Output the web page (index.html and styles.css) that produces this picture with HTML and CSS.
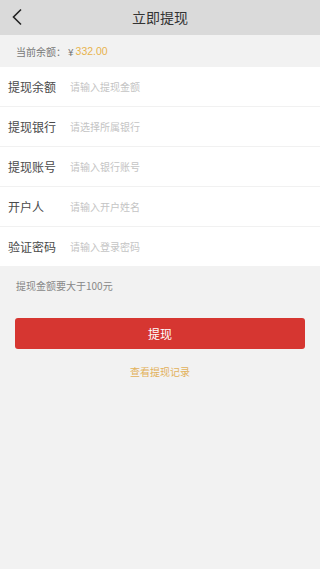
FILE: index.html
```html
<!DOCTYPE html>
<html lang="zh">
<head>
<meta charset="utf-8">
<link rel="stylesheet" href="styles.css">
</head>
<body>
<header class="nav">
  <svg class="back" width="12" height="18" viewBox="0 0 12 18"><path d="M10 1.5 L2.5 9 L10 16.5" fill="none" stroke="#222" stroke-width="1.6"/></svg>
  <h1 class="title">立即提现</h1>
</header>
<div class="balance">当前余额：<span class="yen">¥</span><span class="amount">332.00</span></div>
<div class="form">
  <div class="row"><span class="label">提现余额</span><span class="ph">请输入提现金额</span></div>
  <div class="row"><span class="label">提现银行</span><span class="ph">请选择所属银行</span></div>
  <div class="row"><span class="label">提现账号</span><span class="ph">请输入银行账号</span></div>
  <div class="row"><span class="label">开户人</span><span class="ph">请输入开户姓名</span></div>
  <div class="row"><span class="label">验证密码</span><span class="ph">请输入登录密码</span></div>
</div>
<p class="note">提现金额要大于100元</p>
<div class="btn">提现</div>
<div class="link">查看提现记录</div>
</body>
</html>
```
FILE: styles.css
```css
* { box-sizing: border-box; }
html, body { margin: 0; padding: 0; }
body {
  background: #f2f2f2;
  font-family: "Noto Sans CJK SC", "Noto Sans", sans-serif;
  width: 320px;
  height: 569px;
  overflow: hidden;
}
.nav {
  position: relative;
  height: 35px;
  background: #dadada;
  display: flex;
  align-items: center;
  justify-content: center;
}
.back { position: absolute; left: 11px; top: 8px; }
.title {
  margin: 0;
  font-size: 14px;
  font-weight: normal;
  color: #333;
  line-height: 35px;
}
.balance {
  height: 32px;
  padding-left: 16px;
  display: flex;
  align-items: center;
  font-size: 10px;
  color: #777;
}
.yen { color: #777; margin-left: 2px; margin-right: 2px; }
.amount { color: #e8b24e; font-family: "Liberation Sans", sans-serif; font-size: 10.5px; }
.form { background: #fff; }
.row {
  height: 40px;
  display: flex;
  align-items: center;
  border-top: 1px solid #f1f1f1;
}
.row:first-child { border-top: none; height: 39px; }
.label {
  width: 70px;
  padding-left: 8px;
  font-size: 12px;
  color: #4a4a4a;
}
.ph { font-size: 10px; color: #c4c4c4; }
.note {
  margin: 0;
  padding: 13px 0 0 16px;
  font-size: 10px;
  color: #888;
  line-height: 14px;
}
.btn {
  margin: 25px 15px 0 15px;
  height: 31px;
  border-radius: 3px;
  background: #d63631;
  color: #fff;
  font-size: 12px;
  display: flex;
  align-items: center;
  justify-content: center;
}
.link {
  margin-top: 16px;
  text-align: center;
  font-size: 10px;
  color: #e2b15a;
  line-height: 14px;
}
```
